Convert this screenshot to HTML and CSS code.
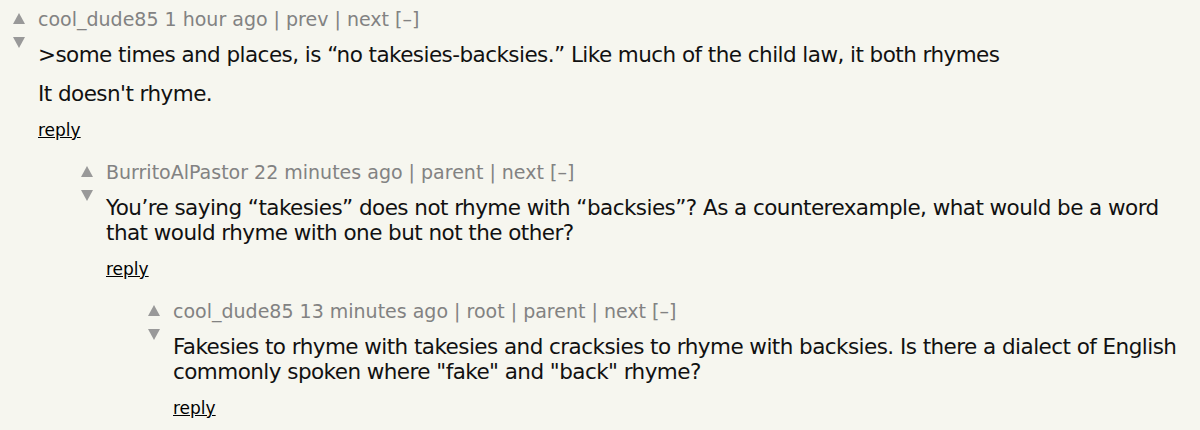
FILE: index.html
```html
<!DOCTYPE html>
<html lang="en">
<head>
<meta charset="utf-8">
<title>Thread</title>
<link rel="stylesheet" href="styles.css">
</head>
<body>
<div class="thread">
  <div class="comment">
    <div class="votes">
      <span class="arrow up"></span>
      <span class="arrow down"></span>
    </div>
    <div class="content">
      <div class="head"><span class="user">cool_dude85</span> <span class="age">1 hour ago</span> | <span>prev</span> | <span>next</span> <span>[–]</span></div>
      <div class="text">
        <p>&gt;some times and places, is “no takesies-backsies.” Like much of the child law, it both rhymes</p>
        <p>It doesn't rhyme.</p>
      </div>
      <div class="reply"><a href="#">reply</a></div>
    </div>
  </div>

  <div class="comment lvl1">
    <div class="votes">
      <span class="arrow up"></span>
      <span class="arrow down"></span>
    </div>
    <div class="content">
      <div class="head"><span class="user">BurritoAlPastor</span> <span class="age">22 minutes ago</span> | <span>parent</span> | <span>next</span> <span>[–]</span></div>
      <div class="text">
        <p>You’re saying “takesies” does not rhyme with “backsies”? As a counterexample, what would be a word that would rhyme with one but not the other?</p>
      </div>
      <div class="reply"><a href="#">reply</a></div>
    </div>
  </div>

  <div class="comment lvl2">
    <div class="votes">
      <span class="arrow up"></span>
      <span class="arrow down"></span>
    </div>
    <div class="content">
      <div class="head"><span class="user">cool_dude85</span> <span class="age">13 minutes ago</span> | <span>root</span> | <span>parent</span> | <span>next</span> <span>[–]</span></div>
      <div class="text">
        <p>Fakesies to rhyme with takesies and cracksies to rhyme with backsies. Is there a dialect of English commonly spoken where "fake" and "back" rhyme?</p>
      </div>
      <div class="reply"><a href="#">reply</a></div>
    </div>
  </div>
</div>
</body>
</html>
```

FILE: styles.css
```css
html, body {
  margin: 0;
  padding: 0;
  background: #f6f6ef;
}

body {
  font-family: "DejaVu Sans", Verdana, sans-serif;
  color: #000;
}

.thread {
  padding: 7px 10px 0 0;
}

.comment {
  display: flex;
  align-items: flex-start;
}

.comment + .comment {
  margin-top: 20px;
}

.lvl1 { margin-left: 68px; }
.lvl2 { margin-left: 135px; }

.votes {
  width: 38px;
  flex: none;
  display: flex;
  flex-direction: column;
  padding-left: 13px;
  padding-top: 6px;
  box-sizing: border-box;
}

.arrow {
  display: block;
  width: 0;
  height: 0;
  border-left: 6.5px solid transparent;
  border-right: 6.5px solid transparent;
}

.arrow.up {
  border-bottom: 11px solid #999;
}

.arrow.down {
  margin-top: 13px;
  border-top: 11px solid #999;
}

.content {
  flex: 1;
  min-width: 0;
}

.head {
  font-size: 19px;
  line-height: 24px;
  color: #828282;
}

.text {
  margin-top: 11px;
  font-size: 21.5px;
  letter-spacing: -0.55px;
  line-height: 25px;
  color: #111;
}

.text p {
  margin: 0;
}

.text p + p {
  margin-top: 14px;
}

.reply {
  margin-top: 14px;
  font-size: 17px;
  line-height: 20px;
}

.reply a {
  color: #000;
  text-decoration: underline;
}
```
